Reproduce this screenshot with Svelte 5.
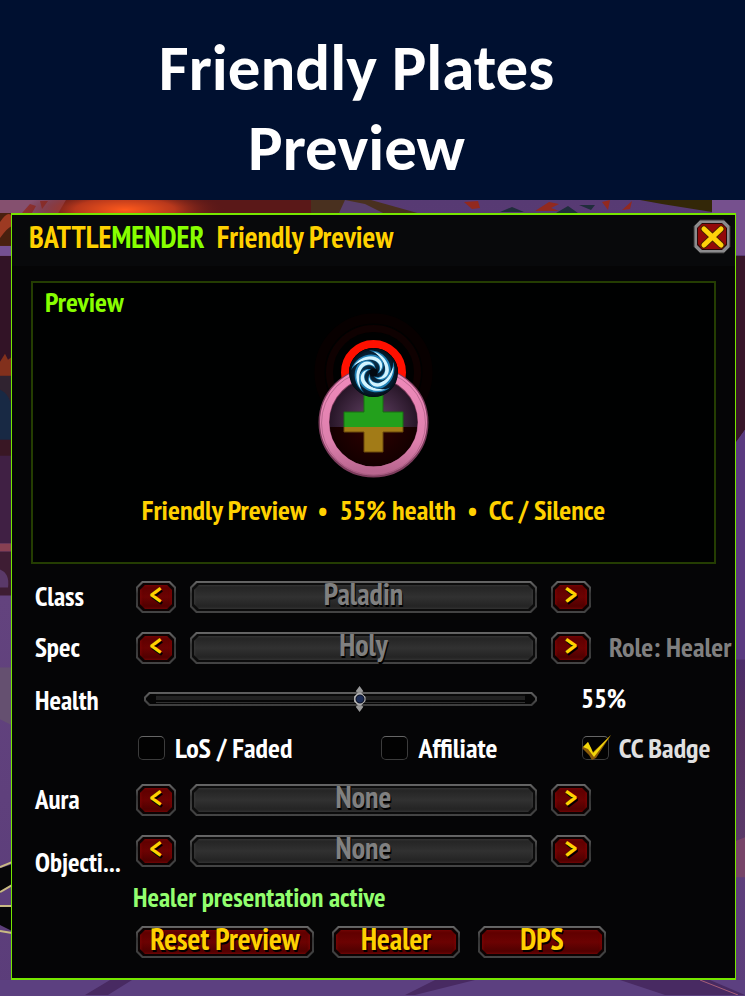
<script lang="ts">
  type Choice = { id: string; label: string; options: string[]; index: number };

  let picks: Choice[] = $state([
    { id: 'class', label: 'Class', options: ['Paladin', 'Priest', 'Druid'], index: 0 },
    { id: 'spec', label: 'Spec', options: ['Holy', 'Protection', 'Retribution'], index: 0 }
  ]);
  let extras: Choice[] = $state([
    { id: 'aura', label: 'Aura', options: ['None', 'Buff', 'Debuff'], index: 0 },
    { id: 'objective', label: 'Objecti...', options: ['None', 'Flag', 'Orb'], index: 0 }
  ]);
  let flags = $state([
    { id: 'los', label: 'LoS / Faded', on: false },
    { id: 'affiliate', label: 'Affiliate', on: false },
    { id: 'cc', label: 'CC Badge', on: true }
  ]);
  let health = $state(55);
  let role = $state('Healer');

  const arms = [0, 72, 144, 216, 288];

  function step(c: Choice, by: number) {
    c.index = (c.index + by + c.options.length) % c.options.length;
  }

  function reset() {
    for (const c of [...picks, ...extras]) c.index = 0;
    flags.forEach((f) => (f.on = f.id === 'cc'));
    health = 55;
    role = 'Healer';
  }
</script>

{#snippet picker(c: Choice)}
  <div class="row {c.id}" role="group" aria-labelledby="label-{c.id}">
    <span class="label" id="label-{c.id}">{c.label}</span>
    <button class="btn" onclick={() => step(c, -1)}><span>&lt;</span></button>
    <button class="btn field" disabled><span>{c.options[c.index]}</span></button>
    <button class="btn" onclick={() => step(c, 1)}><span>&gt;</span></button>
    {#if c.id === 'spec'}
      <span class="role">Role: {role}</span>
    {/if}
  </div>
{/snippet}

<header class="banner">
  <h1>Friendly Plates<br />Preview</h1>
</header>

<main class="scene">
  <svg class="backdrop" viewBox="0 200 745 796" preserveAspectRatio="none" aria-hidden="true">
    <defs>
      <radialGradient id="fire">
        <stop offset="0" stop-color="#ff5a1c" />
        <stop offset="0.5" stop-color="#b8381c" />
        <stop offset="1" stop-color="#5a1818" stop-opacity="0" />
      </radialGradient>
      <linearGradient id="dusk" x2="0" y2="1">
        <stop offset="0" stop-color="#573a73" />
        <stop offset="0.5" stop-color="#63437e" />
        <stop offset="1" stop-color="#5b3d7a" />
      </linearGradient>
      <linearGradient id="shade" x2="0" y2="1">
        <stop offset="0" stop-color="#4a2c68" />
        <stop offset="0.4" stop-color="#55305f" />
        <stop offset="1" stop-color="#5a3968" />
      </linearGradient>
    </defs>
    <rect y="200" width="745" height="796" fill="url(#dusk)" />
    <path d="M0 200h66l-8 13H0z" fill="#85506f" />
    <path d="M22 213l8-9 6 2-4 7zM40 201l8 0-6 8z" fill="#8e3130" />
    <path d="M66 200h245v14H58z" fill="#5a1818" />
    <ellipse cx="125" cy="210" rx="100" ry="24" fill="url(#fire)" />
    <path d="M311 200h60l50 14H311z" fill="#49301f" />
    <path d="M345 200l20 4 18 9h-44z" fill="#583f6c" />
    <path d="M640 200h75l-3 12-50-8z" fill="#332708" />
    <path d="M464 202l14-1 2 7-8 1zM535 211l14-9 10 2-8 4 8 3zM602 202l8-2-2 10zM622 210l10-9-2 8z" fill="#92291f" />
    <path d="M500 212l12-5 12 5zM579 205l16 0-4 5zM556 213l12-7 10 7z" fill="#202d3c" />
    <path d="M0 213h12v60H0z" fill="#49200f" />
    <path d="M0 222q8-12 12-6v10q-5 2-12 12z" fill="#9d3a22" />
    <path d="M0 246h12v10H0z" fill="#755092" />
    <path d="M0 256h12v110H0z" fill="#321326" />
    <path d="M0 362l5-8 3 6 4-3v26H0z" fill="#82301c" />
    <path d="M0 376h12v50H0z" fill="#302330" />
    <path d="M0 390q10 4 12 20v32H0z" fill="#182944" />
    <path d="M0 440h12v40H0z" fill="#391724" />
    <path d="M0 456h12v88H0z" fill="#402044" />
    <path d="M0 544h12v8H0z" fill="#874052" />
    <path d="M0 552h12v44H0z" fill="#3e1d33" />
    <path d="M0 570q10 4 8 18H0z" fill="#5a3969" />
    <path d="M0 668h12v58l-12-6z" fill="#655070" />
    <path d="M0 869l12-4v20l-12 9zM0 907l12 1v24l-12-6z" fill="#060608" />
    <path d="M0 868l12-5M0 893l12-7M0 907h12M0 932l12 2" fill="none" stroke="#c9ba83" stroke-width="2" />
    <path d="M735 256h10v174l-10 14z" fill="#381529" />
    <path d="M735 444l10-14v230h-10z" fill="#5a3a80" />
    <path d="M712 200h33v55h-33z" fill="#76508e" />
    <path d="M735 660h10v182h-10z" fill="url(#shade)" />
    <path d="M735 842l10-4v40h-10z" fill="#774468" />
    <path d="M0 981h745v15H0z" fill="#5c4080" />
    <path d="M85 996l25-15h22l-24 15zM405 996l30-15h40l-60 15zM620 981h90l35 15h-80z" fill="#482a62" />
    <path d="M700 981l38 15" stroke="#a75f79" stroke-width="1" />
  </svg>

  <section class="panel">
    <div class="titlebar">
      <h2><b>BATTLE</b><b class="lime">MENDER</b> <span>Friendly Preview</span></h2>
      <button class="close" aria-label="Close">
        <svg viewBox="0 0 38 36" aria-hidden="true">
          <path d="M7 1h24l6 6v21l-6 6H7l-6-6V7z" fill="#8b8b8d" stroke="#343434" />
          <path d="M9 4h20l5 5v17l-5 5H9l-5-5V9z" fill="#2a0808" />
          <path d="M9 5h20l4 4v16l-4 5H9l-4-5V9z" fill="#930909" />
          <path d="M11 10l17 16M28 10L11 26" stroke="#4a2300" stroke-width="7" stroke-linecap="round" />
          <path d="M11 10l17 16M28 10L11 26" stroke="#ffd10a" stroke-width="5" stroke-linecap="round" />
        </svg>
      </button>
    </div>

    <div class="preview">
      <h3>Preview</h3>
      <svg class="emblem" viewBox="-1 17 149 167" aria-hidden="true">
        <defs>
          <radialGradient id="glass">
            <stop offset="0" stop-color="#67466a" />
            <stop offset="1" stop-color="#241324" />
          </radialGradient>
          <radialGradient id="ember">
            <stop offset="0" stop-color="#320000" />
            <stop offset="1" stop-color="#120000" />
          </radialGradient>
          <linearGradient id="rim" x2="0" y2="1">
            <stop offset="0" stop-color="#f08abb" />
            <stop offset="0.7" stop-color="#dd80ad" />
            <stop offset="1" stop-color="#b9668f" />
          </linearGradient>
          <radialGradient id="orb">
            <stop offset="0" stop-color="#020b14" />
            <stop offset="0.5" stop-color="#0a3350" />
            <stop offset="1" stop-color="#03121e" />
          </radialGradient>
          <clipPath id="upper"><path d="M20 60h110v67H20z" /></clipPath>
          <clipPath id="lower"><path d="M20 127h110v60H20z" /></clipPath>
          <clipPath id="disc"><circle cx="73.5" cy="72.5" r="24" /></clipPath>
        </defs>
        <circle cx="73.5" cy="72.5" r="54" fill="none" stroke="#070000" stroke-width="10" />
        <circle cx="73.5" cy="72.5" r="44" fill="none" stroke="#0f0101" stroke-width="7" />
        <circle cx="73.5" cy="72.5" r="28.5" fill="none" stroke="#ff1000" stroke-width="8" />
        <circle cx="73.5" cy="122.5" r="46" fill="url(#glass)" clip-path="url(#upper)" />
        <circle cx="73.5" cy="122.5" r="46" fill="url(#ember)" clip-path="url(#lower)" />
        <circle cx="73.5" cy="122.5" r="49.5" fill="none" stroke="#7c3d5d" stroke-width="11" />
        <circle cx="73.5" cy="122" r="49" fill="none" stroke="url(#rim)" stroke-width="9" />
        <circle cx="73.5" cy="123" r="52" fill="none" stroke="#8f4d6e" stroke-width="1" opacity="0.5" />
        <g stroke-width="1">
          <path d="M64 92h19v20h20v20H83v20H64v-20H44v-20h20z" fill="#23a01c" stroke="#167011" clip-path="url(#upper)" />
          <path d="M64 92h19v20h20v20H83v20H64v-20H44v-20h20z" fill="#a27b17" stroke="#6d4a0c" clip-path="url(#lower)" />
        </g>
        <circle cx="73.5" cy="72.5" r="24.5" fill="#02070c" />
        <g clip-path="url(#disc)">
          <circle cx="73.5" cy="72.5" r="24" fill="url(#orb)" />
          {#each arms as a (a)}
            <g transform="translate(73.5 72.5) rotate({a})">
              <path d="M-2-3C-12-6-18 5-12 13C-6 20 6 23 17 15C7 19-3 16-7 10C-11 4-8-2-2-3z" fill="#1f7fb4" />
              <path d="M-5-3C-12-2-15 5-11 11C-6 18 4 20 12 17C4 17-4 15-8 9C-11 4-9-1-5-3z" fill="#d4f5ff" />
            </g>
          {/each}
          <circle cx="73.5" cy="72.5" r="4" fill="#020a12" />
          <circle cx="73.5" cy="72.5" r="23.5" fill="none" stroke="#03131f" stroke-width="2" />
        </g>
      </svg>
      <p>Friendly Preview&nbsp; •&nbsp; {health}% health&nbsp; •&nbsp; CC / Silence</p>
    </div>

    <div class="form">
      {#each picks as c (c.id)}
        {@render picker(c)}
      {/each}

      <div class="row">
        <label class="label" for="health">Health</label>
        <div class="slider">
          <input id="health" type="range" min="0" max="100" bind:value={health} />
        </div>
        <output class="percent" for="health">{health}%</output>
      </div>

      <div class="checks">
        {#each flags as f (f.id)}
          <label class="check" class:dim={f.on}>
            <input type="checkbox" bind:checked={f.on} />
            {#if f.on}
              <svg viewBox="0 0 30 27" aria-hidden="true">
                <path d="M0 14l6-6 3 6 2 4L29 1 14 24l-4 2-3-5z" fill="#8a5a08" />
                <path d="M1 13l5-5 3 6 2 5L29 1 12 23 6 15z" fill="#f2d80a" />
              </svg>
            {/if}
            <span>{f.label}</span>
          </label>
        {/each}
      </div>

      {#each extras as c (c.id)}
        {@render picker(c)}
      {/each}
    </div>

    <p class="status">{role} presentation active</p>
    <div class="actions">
      <button class="btn wide" onclick={reset}><span>Reset Preview</span></button>
      <button class="btn" onclick={() => (role = 'Healer')}><span>Healer</span></button>
      <button class="btn" onclick={() => (role = 'DPS')}><span>DPS</span></button>
    </div>
  </section>
</main>

<style>
  :global(body) {
    margin: 0;
    background: #5c4080;
  }
  h1, h2, h3, p {
    margin: 0;
  }
  .banner {
    padding: 28px 32px 12px 0;
    background: #001030;
    color: #fff;
    text-align: center;
  }
  h1 {
    font: bold 65px/80px Carlito, Calibri, Lato, sans-serif;
  }
  .scene {
    position: relative;
    padding: 13px 9px 15px 11px;
    font: bold 27px/30px 'PT Sans Narrow', 'Liberation Sans Narrow', 'Open Sans', sans-serif;
    color: #fff;
  }
  .backdrop {
    position: absolute;
    inset: 0;
    width: 100%;
    height: 100%;
  }
  .panel {
    position: relative;
    border: solid #76e600;
    border-width: 2px 1px;
    background: #050506;
    padding-bottom: 20px;
  }
  .titlebar {
    display: flex;
    align-items: center;
    justify-content: space-between;
    box-sizing: border-box;
    height: 51px;
    padding: 0 4px 8px 17px;
    background: #08090b;
  }
  h2 {
    font-size: 30px;
    color: #ffd100;
    text-shadow: 1px 1px #000;
  }
  h2 span {
    margin-left: 6px;
  }
  .lime {
    color: #8f0;
  }
  .close {
    width: 38px;
    height: 36px;
    padding: 0;
    border: 0;
    background: none;
  }
  .close svg {
    display: block;
  }
  .preview {
    margin: 15px 19px 17px;
    padding: 4px 12px 37px;
    border: 2px solid #243d02;
    background: #000101;
    font-size: 28px;
    text-align: center;
  }
  h3 {
    font-size: 28px;
    text-align: left;
    color: #8f0;
  }
  .emblem {
    display: block;
    width: 149px;
    height: 167px;
    margin: 0 auto 11px;
    overflow: visible;
  }
  .preview p {
    color: #ffd100;
  }
  .form {
    display: flex;
    flex-direction: column;
    gap: 19px;
    padding: 0 5px 0 23px;
  }
  .row {
    display: grid;
    grid-template-columns: 87px 40px 1fr 40px 125px;
    column-gap: 14px;
    align-items: start;
    white-space: nowrap;
  }
  label.label {
    margin-top: 2px;
  }
  .objective .label {
    margin-top: 12px;
  }
  .role {
    padding-left: 4px;
    font-size: 28px;
    color: #808080;
  }
  .btn {
    position: relative;
    isolation: isolate;
    height: 32px;
    padding: 0;
    border: 0;
    background: linear-gradient(#686868, #353535 40%, #444);
    clip-path: polygon(6px 0, calc(100% - 6px) 0, 100% 6px, 100% calc(100% - 6px), calc(100% - 6px) 100%, 6px 100%, 0 calc(100% - 6px), 0 6px);
    font: inherit;
    font-size: 30px;
    line-height: 26px;
    color: #ffd100;
    text-shadow: 1px 2px #000;
  }
  .btn::before,
  .btn::after {
    content: '';
    position: absolute;
    z-index: -1;
    inset: 2px;
    background: #0c0303;
    clip-path: polygon(5px 0, calc(100% - 5px) 0, 100% 5px, 100% calc(100% - 5px), calc(100% - 5px) 100%, 5px 100%, 0 calc(100% - 5px), 0 5px);
  }
  .btn::after {
    inset: 4px;
    background: linear-gradient(#5c0000, #6c0202 50%, #480000);
    box-shadow: inset 0 0 3px 1px #7a0606;
  }
  .btn span {
    display: block;
    height: 32px;
  }
  .field {
    color: #808080;
  }
  .field::before {
    background: #0c0c0c;
  }
  .field::after {
    background: linear-gradient(#222, #313131 50%, #202020);
    box-shadow: inset 0 0 3px 1px #383838;
  }
  .slider {
    grid-column: 2 / 4;
    position: relative;
    isolation: isolate;
    display: flex;
    align-items: center;
    height: 32px;
    margin-left: 8px;
  }
  .slider::before,
  .slider::after {
    content: '';
    position: absolute;
    z-index: -1;
    inset: 9px 0;
    background: linear-gradient(#606060, #3c3c3c);
    clip-path: polygon(0 5px, 5px 0, calc(100% - 5px) 0, 100% 5px, 100% calc(100% - 5px), calc(100% - 5px) 100%, 5px 100%, 0 calc(100% - 5px));
  }
  .slider::after {
    inset: 11px 2px;
    background: linear-gradient(#0a0a0a 2px, #222 2px 6px, #060606 6px 8px, #303030 8px 9px, #060606 9px) center / calc(100% - 20px) no-repeat #050505;
    clip-path: polygon(0 4px, 4px 0, calc(100% - 4px) 0, 100% 4px, 100% calc(100% - 4px), calc(100% - 4px) 100%, 4px 100%, 0 calc(100% - 4px));
  }
  .slider input {
    appearance: none;
    width: 100%;
    height: 26px;
    margin: 0;
    background: none;
  }
  .slider input::-webkit-slider-thumb {
    appearance: none;
    width: 12px;
    height: 26px;
    background: radial-gradient(circle, #1b2b55 3px, #0c1226 4px, #bbb 5px, #888 7px, #999 8px);
    clip-path: polygon(50% 0, 82% 20%, 64% 26%, 100% 42%, 100% 58%, 64% 74%, 82% 80%, 50% 100%, 18% 80%, 36% 74%, 0 58%, 0 42%, 36% 26%, 18% 20%);
  }
  .percent {
    grid-column: 4 / 6;
    padding-left: 30px;
  }
  .checks {
    display: grid;
    grid-template-columns: 243fr 200fr 148fr;
    height: 31px;
    padding-left: 103px;
  }
  .check {
    position: relative;
    display: flex;
    align-items: center;
    gap: 10px;
    height: 28px;
    font-size: 28px;
    white-space: nowrap;
  }
  .check input {
    appearance: none;
    flex: none;
    width: 27px;
    height: 24px;
    margin: 0;
    border: 1px solid #3c3c3c;
    border-top-color: #666;
    border-radius: 5px;
    background: #020202;
  }
  .check svg {
    position: absolute;
    left: 0;
    top: 0;
    width: 30px;
    height: 27px;
  }
  .dim {
    color: #e0e0e0;
  }
  .status {
    margin: 5px 0 14px 121px;
    color: #93ff6f;
  }
  .actions {
    display: flex;
    gap: 18px;
    padding-left: 124px;
  }
  .actions .btn {
    width: 128px;
  }
  .actions .wide {
    width: 178px;
  }
</style>
